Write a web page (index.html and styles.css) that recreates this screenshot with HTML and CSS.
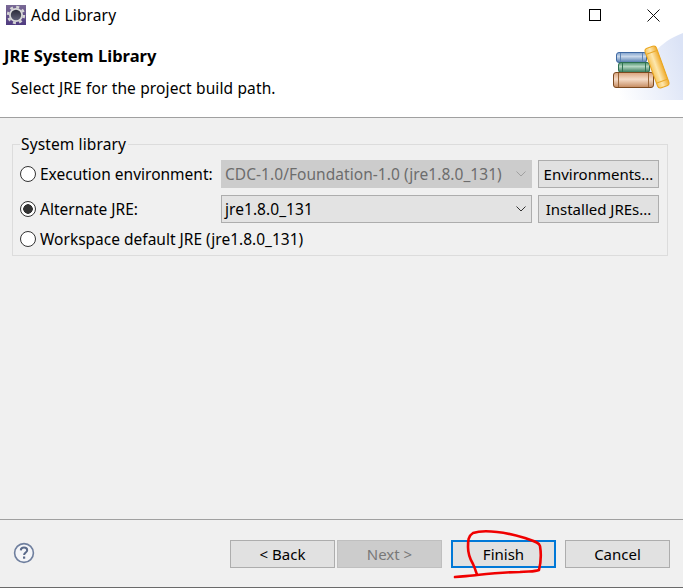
FILE: index.html
```html
<!DOCTYPE html>
<html lang="en">
<head>
<meta charset="utf-8">
<title>Add Library</title>
<link rel="stylesheet" href="styles.css">
</head>
<body>
<div class="window">
  <div class="titlebar">
    <svg class="app-icon" width="20" height="20" viewBox="0 0 20 20">
      <defs>
        <linearGradient id="appbg" x1="0" y1="0" x2="0" y2="1"><stop offset="0" stop-color="#7a6a96"/><stop offset="1" stop-color="#4f3b80"/></linearGradient>
        <linearGradient id="appcore" x1="0" y1="0" x2="0" y2="1"><stop offset="0" stop-color="#2c2c3a"/><stop offset="1" stop-color="#5f5f76"/></linearGradient>
      </defs>
      <rect width="20" height="20" fill="url(#appbg)"/>
      <circle cx="10" cy="10" r="8" fill="none" stroke="#d4d4d4" stroke-width="2.4" stroke-dasharray="3 3.28"/>
      <circle cx="10" cy="10" r="7" fill="#d8d8d8"/>
      <circle cx="10" cy="10" r="5.2" fill="url(#appcore)"/>
    </svg>
    <span class="title-text">Add Library</span>
    <div class="window-controls">
      <svg width="12" height="12" viewBox="0 0 12 12"><rect x="0.5" y="0.5" width="11" height="11" fill="none" stroke="#000"/></svg>
      <svg width="13" height="13" viewBox="0 0 13 13"><path d="M0.5 0.5L12.5 12.5M12.5 0.5L0.5 12.5" stroke="#111" fill="none"/></svg>
    </div>
  </div>

  <header class="banner">
    <div class="banner-text">
      <h1 class="banner-title">JRE System Library</h1>
      <p class="banner-sub">Select JRE for the project build path.</p>
    </div>
    <svg class="banner-art" width="71" height="67" viewBox="0 0 71 67">
      <defs>
        <linearGradient id="wash" x1="0" y1="0.6" x2="1" y2="0.3"><stop offset="0" stop-color="#ffffff"/><stop offset="1" stop-color="#dbe3f6"/></linearGradient>
        <linearGradient id="blue" x1="0" y1="0" x2="0" y2="1"><stop offset="0" stop-color="#7ea0cc"/><stop offset=".4" stop-color="#c9d8ea"/><stop offset="1" stop-color="#4f79ad"/></linearGradient>
        <linearGradient id="green" x1="0" y1="0" x2="0" y2="1"><stop offset="0" stop-color="#4d9470"/><stop offset=".4" stop-color="#b4d6c2"/><stop offset="1" stop-color="#2f7353"/></linearGradient>
        <linearGradient id="tan" x1="0" y1="0" x2="0" y2="1"><stop offset="0" stop-color="#d9a27c"/><stop offset=".45" stop-color="#f5dcc8"/><stop offset="1" stop-color="#c58a5f"/></linearGradient>
        <linearGradient id="gold" x1="0" y1="0" x2="1" y2="0"><stop offset="0" stop-color="#f7c65c"/><stop offset=".45" stop-color="#fde7ae"/><stop offset="1" stop-color="#f0ab2c"/></linearGradient>
      </defs>
      <path d="M0 67L0 55C15 52 25 47 30 40C38 25 45 10 71 0L71 67Z" fill="url(#wash)"/>
      <rect x="4.5" y="19.5" width="30" height="10" rx="2.5" fill="url(#blue)" stroke="#3f69a3"/>
      <path d="M8.5 20v9M30.5 20v9" stroke="#5d83b4"/>
      <rect x="6.5" y="29.5" width="31" height="10" rx="2.5" fill="url(#green)" stroke="#2c6e4f"/>
      <path d="M10.5 30v9M33.5 30v9" stroke="#2f7353"/>
      <rect x="1.5" y="39.5" width="40" height="15" rx="2.5" fill="url(#tan)" stroke="#7d4a20"/>
      <path d="M6.5 40v14M36.5 40v14" stroke="#9a6436"/>
      <g transform="rotate(-20 45 34)">
        <rect x="39" y="13" width="12" height="42" rx="3" fill="url(#gold)" stroke="#eaa61f"/>
        <path d="M39.5 18.5h11M39.5 49h11" stroke="#e8a92c"/>
      </g>
    </svg>
  </header>

  <main class="content">
    <fieldset class="group">
      <legend class="group-label">System library</legend>
      <div class="group-grid">
        <label class="choice"><input class="radio" type="radio" name="jre"><span>Execution environment:</span></label>
        <div class="combo combo-disabled"><span>CDC-1.0/Foundation-1.0 (jre1.8.0_131)</span><svg class="chev" width="10" height="6" viewBox="0 0 10 6"><path d="M0.5 0.5L5 5L9.5 0.5" fill="none" stroke="currentColor"/></svg></div>
        <button class="btn btn-side" type="button">Environments...</button>

        <label class="choice"><input class="radio" type="radio" name="jre" checked><span>Alternate JRE:</span></label>
        <div class="combo"><span>jre1.8.0_131</span><svg class="chev" width="10" height="6" viewBox="0 0 10 6"><path d="M0.5 0.5L5 5L9.5 0.5" fill="none" stroke="currentColor"/></svg></div>
        <button class="btn btn-side" type="button">Installed JREs...</button>

        <label class="choice choice-wide"><input class="radio" type="radio" name="jre"><span>Workspace default JRE (jre1.8.0_131)</span></label>
      </div>
    </fieldset>
  </main>

  <footer class="footer">
    <svg class="help" width="22" height="22" viewBox="0 0 22 22">
      <circle cx="11" cy="11" r="9.4" fill="#f4f5f8" stroke="#6f7f9e" stroke-width="1.6"/>
      <path d="M7.8 8.4C7.9 6.5 9.3 5.6 11 5.6C12.9 5.6 14.2 6.7 14.2 8.2C14.2 10.4 11.1 10.6 11.1 13" fill="none" stroke="#5a6a8a" stroke-width="2"/>
      <rect x="10" y="14.5" width="2.2" height="2.2" fill="#5a6a8a"/>
    </svg>
    <div class="footer-buttons">
      <div class="nav-pair">
        <button class="btn btn-foot" type="button">&lt; Back</button>
        <button class="btn btn-foot btn-disabled" type="button" disabled>Next &gt;</button>
      </div>
      <button class="btn btn-foot btn-default" type="button">Finish</button>
      <button class="btn btn-foot" type="button">Cancel</button>
    </div>
  </footer>

  <svg class="scribble" width="683" height="588" viewBox="0 0 683 588">
    <path d="M455 577C465 576 472 576 477 575C495 573 505 572 520 572C528 571 535 572 539 570C541 562 541 552 540 546C539 542 533 541 525 538C515 535 508 533 497 532C488 531 479 531 473 533C468 536 468 541 468 547C468 554 470 559 473 564C475 568 476 572 477 575" fill="none" stroke="#f00000" stroke-width="2.6" stroke-linecap="round" stroke-linejoin="round"/>
  </svg>
</div>
</body>
</html>
```
FILE: styles.css
```css
* { box-sizing: border-box; }
html, body { margin: 0; padding: 0; }
body { font-family: "Noto Sans", "Open Sans", sans-serif; font-size: 15.5px; letter-spacing: 0.13px; color: #000; }

.window {
  position: relative;
  display: flex;
  flex-direction: column;
  width: 683px;
  height: 588px;
  background: #f0f0f0;
  border-bottom: 1px solid #6a6a6a;
  overflow: hidden;
}

.titlebar {
  display: flex;
  align-items: center;
  height: 30px;
  padding-left: 6px;
  background: #fff;
  flex: none;
}
.app-icon { flex: none; }
.title-text { margin-left: 5px; }
.window-controls {
  margin-left: auto;
  display: flex;
  align-items: center;
  gap: 46px;
  padding-right: 23px;
}

.banner {
  display: flex;
  justify-content: space-between;
  height: 88px;
  background: #fff;
  border-bottom: 1px solid #a0a0a0;
  flex: none;
}
.banner-text { padding: 16px 0 0 4px; }
.banner-title { margin: 0; font-size: 16.5px; line-height: 20px; font-weight: 700; letter-spacing: 0; }
.banner-sub { margin: 12px 0 0 7px; line-height: 20px; }
.banner-art { flex: none; margin-top: 3px; }

.content { flex: 1; padding: 16px 15px 0 12px; }
.group {
  margin: 0;
  padding: 6px 7px 0 7px;
  height: 122px;
  border: 1px solid #dcdcdc;
  min-width: 0;
}
.group-label { padding: 0 2px 0 1px; margin-left: 0; line-height: 20px; }
.group-grid {
  display: grid;
  grid-template-columns: 195px 311px 121px;
  grid-template-rows: 28px 28px 20px;
  column-gap: 6px;
  row-gap: 7px;
  letter-spacing: 0;
}
.choice { display: flex; align-items: center; gap: 4px; white-space: nowrap; }
.choice-wide { grid-column: 1 / -1; margin-top: -2px; }

.radio {
  appearance: none;
  flex: none;
  width: 16px;
  height: 16px;
  margin: 0;
  border: 1px solid #333;
  border-radius: 50%;
  background: #fff;
}
.radio:checked { background: radial-gradient(circle, #333 0 4.5px, #fff 5px); }

.combo {
  display: flex;
  align-items: center;
  justify-content: space-between;
  padding: 0 5px 0 3px;
  background: #e3e3e3;
  border: 1px solid #adadad;
  color: #000;
  white-space: nowrap;
  letter-spacing: 0.05px;
}
.combo .chev { color: #333; }
.combo-disabled { background: #ccc; border-color: #ccc; color: #6d6d6d; }
.combo-disabled .chev { color: #a0a0a0; }

.btn {
  font-family: inherit;
  font-size: 15px;
  letter-spacing: 0;
  color: #000;
  background: #e1e1e1;
  border: 1px solid #adadad;
  padding: 0;
  height: 28px;
  white-space: nowrap;
}
.btn-side { width: 121px; }
.btn-foot { width: 105px; }
.btn-disabled { background: #ccc; border-color: #bfbfbf; color: #787878; }
.btn-default { border: 2px solid #0078d7; }

.footer {
  flex: none;
  display: flex;
  align-items: center;
  justify-content: space-between;
  height: 68px;
  padding: 0 13px 0 13px;
  border-top: 1px solid #a0a0a0;
}
.help { flex: none; margin-bottom: 2px; }
.footer-buttons { display: flex; gap: 9px; }
.nav-pair { display: flex; gap: 2px; }

.scribble { position: absolute; left: 0; top: 0; pointer-events: none; }
```
